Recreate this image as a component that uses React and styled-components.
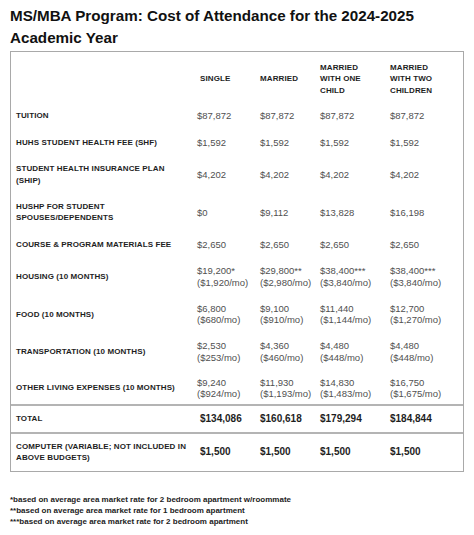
import React from 'react'
import styled, { createGlobalStyle } from 'styled-components'

const GlobalStyle = createGlobalStyle`
  html, body {
    margin: 0;
    padding: 0;
    background: #fff;
  }
  body {
    font-family: "Liberation Sans", Arial, sans-serif;
    color: #1a1a1a;
  }
`

const Page = styled.div`
  width: 454px;
  padding: 5px 10px 0 10px;
`

const Title = styled.h1`
  margin: 0;
  font-size: 15.2px;
  line-height: 21.5px;
  font-weight: 700;
  color: #111;
`

const Table = styled.div`
  margin-top: 3px;
  border: 1px solid #a9a9a9;
`

const Row = styled.div`
  display: grid;
  grid-template-columns: 183px 60px 60px 70px 1fr;
  align-items: center;
  padding: ${p => p.$pad || '7.25px 0'};
  border-top: ${p => (p.$divider ? '2px solid #b4b4b4' : 'none')};
`

const Label = styled.div`
  padding-left: 5px;
  font-size: 8px;
  line-height: 11.5px;
  font-weight: 700;
  letter-spacing: 0.1px;
  color: #1e1e1e;
  white-space: nowrap;
`

const Head = styled.div`
  padding-left: 6px;
  font-size: 8px;
  line-height: 11.5px;
  font-weight: 700;
  letter-spacing: 0.1px;
  color: #1e1e1e;
  white-space: nowrap;
`

const Value = styled.div`
  padding-left: ${p => (p.$first && !p.$bold ? '3px' : '6px')};
  font-size: ${p => (p.$bold ? '10px' : '9.5px')};
  line-height: 11.5px;
  font-weight: ${p => (p.$bold ? 700 : 400)};
  color: ${p => (p.$bold ? '#1e1e1e' : '#505050')};
  white-space: nowrap;
`

const Notes = styled.div`
  margin-top: 21.5px;
  font-size: 8px;
  line-height: 11.3px;
  font-weight: 700;
  color: #222;
`

const Lines = ({ lines }) =>
  lines.map((l, i) => (
    <React.Fragment key={i}>
      {i > 0 && <br />}
      {l}
    </React.Fragment>
  ))

const headers = [
  ['SINGLE'],
  ['MARRIED'],
  ['MARRIED', 'WITH ONE', 'CHILD'],
  ['MARRIED', 'WITH TWO', 'CHILDREN'],
]

const rows = [
  { label: ['TUITION'], values: ['$87,872', '$87,872', '$87,872', '$87,872'], pad: '7.75px 0' },
  { label: ['HUHS STUDENT HEALTH FEE (SHF)'], values: ['$1,592', '$1,592', '$1,592', '$1,592'], pad: '7.75px 0' },
  { label: ['STUDENT HEALTH INSURANCE PLAN', '(SHIP)'], values: ['$4,202', '$4,202', '$4,202', '$4,202'] },
  { label: ['HUSHP FOR STUDENT', 'SPOUSES/DEPENDENTS'], values: ['$0', '$9,112', '$13,828', '$16,198'] },
  { label: ['COURSE & PROGRAM MATERIALS FEE'], values: ['$2,650', '$2,650', '$2,650', '$2,650'], pad: '7.75px 0' },
  {
    label: ['HOUSING (10 MONTHS)'],
    values: [
      ['$19,200*', '($1,920/mo)'],
      ['$29,800**', '($2,980/mo)'],
      ['$38,400***', '($3,840/mo)'],
      ['$38,400***', '($3,840/mo)'],
    ],
  },
  {
    label: ['FOOD (10 MONTHS)'],
    values: [
      ['$6,800', '($680/mo)'],
      ['$9,100', '($910/mo)'],
      ['$11,440', '($1,144/mo)'],
      ['$12,700', '($1,270/mo)'],
    ],
  },
  {
    label: ['TRANSPORTATION (10 MONTHS)'],
    values: [
      ['$2,530', '($253/mo)'],
      ['$4,360', '($460/mo)'],
      ['$4,480', '($448/mo)'],
      ['$4,480', '($448/mo)'],
    ],
  },
  {
    label: ['OTHER LIVING EXPENSES (10 MONTHS)'],
    values: [
      ['$9,240', '($924/mo)'],
      ['$11,930', '($1,193/mo)'],
      ['$14,830', '($1,483/mo)'],
      ['$16,750', '($1,675/mo)'],
    ],
    pad: '6px 0 4px',
  },
  {
    label: ['TOTAL'],
    values: ['$134,086', '$160,618', '$179,294', '$184,844'],
    bold: true,
    divider: true,
    pad: '7.5px 0',
  },
  {
    label: ['COMPUTER (VARIABLE; NOT INCLUDED IN', 'ABOVE BUDGETS)'],
    values: ['$1,500', '$1,500', '$1,500', '$1,500'],
    bold: true,
    divider: true,
    pad: '6.5px 0 7.5px',
  },
]

const notes = [
  '*based on average area market rate for 2 bedroom apartment w/roommate',
  '**based on average area market rate for 1 bedroom apartment',
  '***based on average area market rate for 2 bedroom apartment',
]

export default function App() {
  return (
    <Page>
      <GlobalStyle />
      <Title>
        MS/MBA Program: Cost of Attendance for the 2024-2025
        <br />
        Academic Year
      </Title>
      <Table>
        <Row $pad="9.5px 0 6px">
          <Label />
          {headers.map((h, i) => (
            <Head key={i}>
              <Lines lines={h} />
            </Head>
          ))}
        </Row>
        {rows.map((r, i) => (
          <Row key={i} $pad={r.pad} $divider={r.divider}>
            <Label>
              <Lines lines={r.label} />
            </Label>
            {r.values.map((v, j) => (
              <Value key={j} $bold={r.bold} $first={j === 0}>
                <Lines lines={Array.isArray(v) ? v : [v]} />
              </Value>
            ))}
          </Row>
        ))}
      </Table>
      <Notes>
        {notes.map((n, i) => (
          <div key={i}>{n}</div>
        ))}
      </Notes>
    </Page>
  )
}
